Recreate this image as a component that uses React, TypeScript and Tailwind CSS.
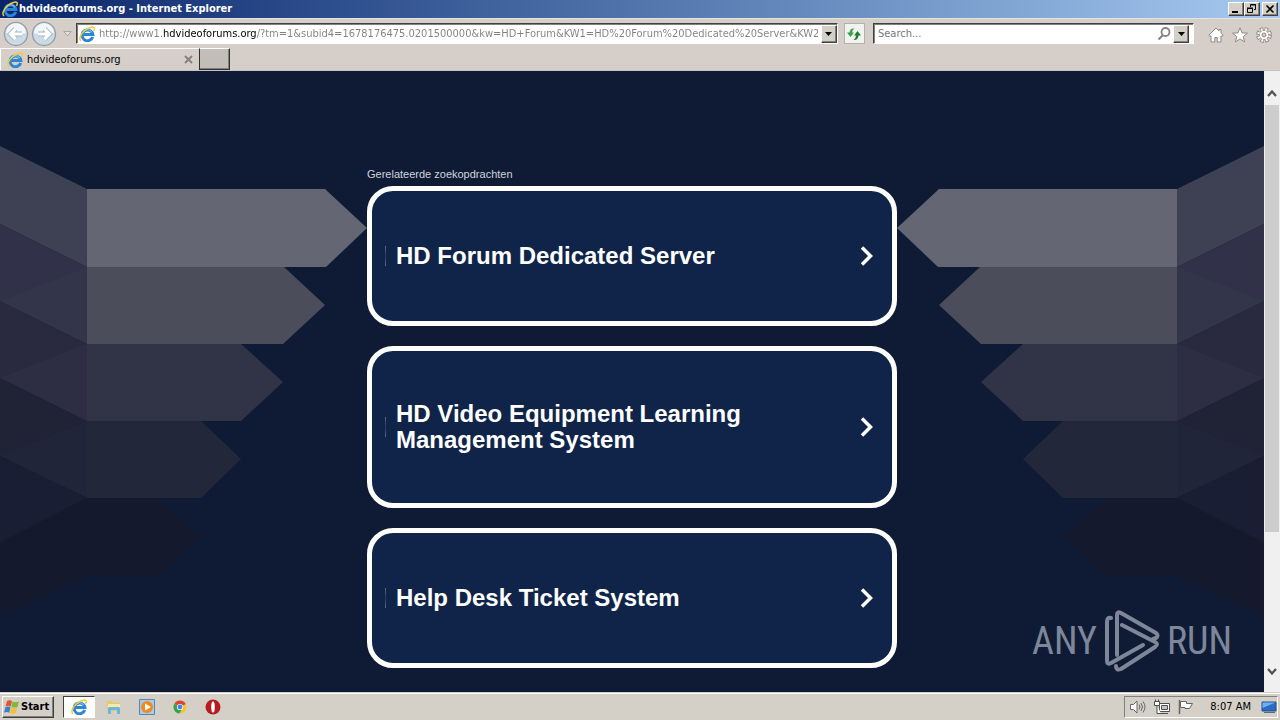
import type { ReactNode } from "react";

const UI = "font-['DejaVu_Sans_Condensed','DejaVu_Sans',sans-serif] text-[11px] leading-[14px]";

const RAISED =
  "border border-t-white border-l-white border-r-[#404040] border-b-[#404040] bg-[#d4d0c8] shadow-[inset_-1px_-1px_0_#808080]";

const ADDRESS =
  "http://www1.hdvideoforums.org/?tm=1&subid4=1678176475.0201500000&kw=HD+Forum&KW1=HD%20Forum%20Dedicated%20Server&KW2=HD";

const searches = [
  "HD Forum Dedicated Server",
  "HD Video Equipment Learning Management System",
  "Help Desk Ticket System",
];

function IeGlyph() {
  return (
    <g fill="none">
      <path d="M13.700 11a5.400 5.400 0 1 1 .2-2.400H4.500" stroke="#2b86d6" strokeWidth="3" />
      <path d="M12.800 6.200A5 5 0 0 0 4 6.500" stroke="#6cc0f2" strokeWidth="1.300" />
      <path
        d="M2.200 14.800C-.4 13.600 1.200 8.600 5.600 4.800 9.400 1.500 14 .2 15 1.700c.5.8.2 2-.5 3.200"
        stroke="#f2cb35"
        strokeWidth="1.500"
      />
    </g>
  );
}

function IeLogo({ className }: { className: string }) {
  return (
    <svg viewBox="0 0 16 16" className={className} aria-hidden="true">
      <IeGlyph />
    </svg>
  );
}

function Caret() {
  return (
    <svg viewBox="0 0 7 4" className="h-1 w-[7px]" aria-hidden="true">
      <path d="M0 0h7L3.500 4z" fill="#000" />
    </svg>
  );
}

function CaptionButton({ label, children }: { label: string; children: ReactNode }) {
  return (
    <button aria-label={label} className={`grid h-[14px] w-4 place-items-center ${RAISED}`}>
      <svg viewBox="0 0 12 10" className="h-[10px] w-3" fill="none" stroke="#000">
        {children}
      </svg>
    </button>
  );
}

function TitleBar() {
  return (
    <header className="flex h-[18px] shrink-0 items-center bg-gradient-to-r from-[#0a246a] to-[#a6caf0] px-[2px]">
      <IeLogo className="h-4 w-4" />
      <h1 className={`${UI} ml-px font-bold text-white`}>hdvideoforums.org - Internet Explorer</h1>
      <div className="ml-auto flex">
        <CaptionButton label="Minimize">
          <path d="M2 8h6" strokeWidth="2" />
        </CaptionButton>
        <CaptionButton label="Restore">
          <path d="M4.500 3V.5h5v5H8M4 1h6M1.500 4.500h5v4h-5zM1 4h6" />
        </CaptionButton>
        <div className="ml-[2px] flex">
          <CaptionButton label="Close">
            <path d="M2.500 1.500l7 7M9.500 1.500l-7 7" strokeWidth="1.600" />
          </CaptionButton>
        </div>
      </div>
    </header>
  );
}

function NavArrows() {
  return (
    <div className="flex shrink-0 items-center">
      {["Back", "Forward"].map((label) => {
        const arrow = label === "Back" ? "M20 13H9M13.500 8l-5 5 5 5" : "M8 13h11M14.500 8l5 5-5 5";
        return (
          <button key={label} aria-label={label} className="h-[26px] w-7">
            <svg viewBox="0 0 28 26" className="h-[26px] w-7" fill="none">
              <circle cx="14" cy="13" r="11.500" fill="#ccdae6" stroke="#929da8" strokeWidth="1.300" />
              <path d="M4 12a10 10 0 0 1 20 0q-10 3-20 0" fill="#f2f6fa" />
              <path d={arrow} stroke="#a3b4c4" strokeWidth="5" />
              <path d={arrow} stroke="#fff" strokeWidth="3.200" />
            </svg>
          </button>
        );
      })}
      <button aria-label="Recent pages" className="grid h-5 w-[18px] place-items-center">
        <svg viewBox="0 0 9 6" className="h-[6px] w-[9px]">
          <path d="M.8.5h7.400L4.500 5z" fill="#e4e0da" stroke="#aaa6a0" />
        </svg>
      </button>
    </div>
  );
}

function Toolbar() {
  return (
    <div className="flex h-[30px] shrink-0 items-center border-t border-[#e8e4dc] bg-[#d6cfc9] pl-[2px]">
      <NavArrows />
      <div className="flex h-[21px] min-w-0 flex-[765] items-center border border-t-[#404040] border-l-[#404040] border-r-white border-b-white bg-white pl-[2px] shadow-[inset_1px_1px_0_#808080]">
        <IeLogo className="h-4 w-4 shrink-0" />
        <input
          aria-label="Address"
          defaultValue={ADDRESS}
          className={`${UI} ml-1 min-w-0 flex-1 bg-[linear-gradient(90deg,#808080_64px,#000_64px,#000_157px,#808080_157px)] bg-clip-text text-transparent outline-none`}
        />
        <button aria-label="Show address list" className={`ml-[3px] grid h-[18px] w-4 shrink-0 place-items-center ${RAISED}`}>
          <Caret />
        </button>
      </div>
      <button aria-label="Refresh" className="mr-2 ml-[6px] grid h-[21px] w-[21px] shrink-0 place-items-center border border-[#b4b0aa] bg-[#f1f3ee]">
        <svg viewBox="0 0 16 16" className="h-4 w-4">
          <path d="M8.500 2.500Q4 2 3.500 6.500H1L4.500 11 8 6.500H6Q6 4 8.500 2.500z" fill="#37a044" />
          <path d="M7.500 14q4.500.5 5-4.500H15L11.500 5 8 9.500h2Q10 12.500 7.500 14z" fill="#1f7f2c" />
        </svg>
      </button>
      <div className="flex h-[21px] min-w-0 flex-[318] items-center border border-t-[#404040] border-l-[#404040] border-r-white border-b-white bg-white pr-1 shadow-[inset_1px_1px_0_#808080]">
        <input
          type="search"
          aria-label="Search"
          placeholder="Search..."
          className={`${UI} ml-1 min-w-0 flex-1 outline-none placeholder:text-[#777777]`}
        />
        <button aria-label="Go" className="grid h-4 w-[18px] place-items-center">
          <svg viewBox="0 0 14 14" className="h-[14px] w-[14px]" fill="none" stroke="#858585">
            <circle cx="8.500" cy="5" r="4" strokeWidth="1.800" />
            <path d="M6 8L1.500 12.500" strokeWidth="2.200" />
          </svg>
        </button>
        <button aria-label="Search options" className={`grid h-[18px] w-4 place-items-center ${RAISED}`}>
          <Caret />
        </button>
      </div>
      <div className="flex shrink-0 items-center gap-2 pt-[2px] pr-2 pl-[14px]">
        <button aria-label="Home">
          <svg viewBox="0 0 16 16" className="h-4 w-4" fill="#fff" stroke="#8e8a85">
            <path d="M8 1L.8 8.300l1.300 1.200.9-.8v6.300h3.800v-4.500h2.400V15H13V8.700l.9.8 1.300-1.200-2.200-2.200V2.500h-2v1.600z" />
          </svg>
        </button>
        <button aria-label="Favorites">
          <svg viewBox="0 0 16 16" className="h-4 w-4" fill="#fff" stroke="#8e8a85">
            <path d="M8 .8l2 5.100 5.400.2-4.200 3.500 1.500 5.400L8 11.900 3.300 15l1.500-5.400L.6 6.100 6 5.900z" />
          </svg>
        </button>
        <button aria-label="Tools">
          <svg viewBox="0 0 16 16" className="h-4 w-4" fill="none">
            <circle cx="8" cy="8" r="6.200" stroke="#8e8a85" strokeWidth="3.400" strokeDasharray="3.400 1.470" />
            <circle cx="8" cy="8" r="4.800" fill="#fff" stroke="#8e8a85" />
            <circle cx="8" cy="8" r="5.700" stroke="#fff" strokeWidth="2.400" strokeDasharray="1.800 2.677" strokeDashoffset="-.6" />
            <circle cx="8" cy="8" r="2" fill="#d6cfc9" stroke="#8e8a85" />
          </svg>
        </button>
      </div>
    </div>
  );
}

function TabStrip() {
  return (
    <div role="tablist" className="flex h-[23px] shrink-0 border-b border-[#c3c4c8] bg-[#d6cfc9]">
      <div className="flex w-[199px] items-center border-t border-l border-white pr-[6px] pl-[6px]">
        <button role="tab" aria-selected="true" className={`${UI} flex flex-1 items-center gap-1 text-left text-black`}>
          <IeLogo className="h-4 w-4" />
          hdvideoforums.org
        </button>
        <button aria-label="Close tab">
          <svg viewBox="0 0 9 9" className="h-[9px] w-[9px]" stroke="#85817c" strokeWidth="2">
            <path d="M1 1l7 7M8 1L1 8" />
          </svg>
        </button>
      </div>
      <button
        aria-label="New tab"
        className="h-[22px] w-[31px] border border-t-white border-r-[#303030] border-b-[#303030] border-l-[#303030] bg-[#c3bdb7] shadow-[inset_-1px_-1px_0_#808080]"
      />
    </div>
  );
}

function ArrowBands() {
  return (
    <g>
      <path d="M0 75l87 43v78L0 153z" fill="#3e4053" />
      <path d="M0 153l87 43v77L0 230z" fill="#31324a" />
      <path d="M0 230l87-34v77z" fill="#33354a" />
      <path d="M0 230l87 43v77L0 307z" fill="#292a3f" />
      <path d="M0 307l87-34v77z" fill="#2d2e43" />
      <path d="M0 307l87 43v77L0 385z" fill="#202236" />
      <path d="M0 385l87-35v77z" fill="#212539" />
      <path d="M0 385l87 42L0 472z" fill="#1a1e34" />
      <path d="M0 472l87-45v78L0 546z" fill="#15192d" />
      <path d="M87 118h238l42 39-41 39H87z" fill="#646673" />
      <path d="M87 196h197l41 38-42 39H87z" fill="#4c4d5b" />
      <path d="M87 273h154l42 38-42 39H87z" fill="#313346" />
      <path d="M87 350h114l40 38-40 39H87z" fill="#22273a" />
      <path d="M87 427h72l41 39-41 39H87z" fill="#15192e" />
    </g>
  );
}

function Backdrop() {
  return (
    <svg
      viewBox="0 0 1264 621"
      preserveAspectRatio="xMidYMin slice"
      className="absolute inset-0 h-full w-full"
      aria-hidden="true"
    >
      <ArrowBands />
      <g transform="matrix(-1 0 0 1 1264 0)">
        <ArrowBands />
      </g>
    </svg>
  );
}

function Watermark() {
  return (
    <div className="absolute right-8 bottom-5 flex items-center gap-[7px] font-['Roboto_Condensed','Liberation_Sans_Narrow','DejaVu_Sans_Condensed',sans-serif] text-[38px] leading-[62px] text-[#7e8799]">
      <span>ANY</span>
      <svg
        viewBox="0 0 56 62"
        className="h-[62px] w-14"
        fill="none"
        stroke="#7e8799"
        strokeWidth="4"
        strokeLinecap="round"
        strokeLinejoin="round"
      >
        <path d="M7 8q-4-1-4 4v39q0 4 4 2l32-18" />
        <path d="M13 45V5q0-4 4-2l35 20q3 3 0 5l-3 1" />
        <path d="M18 15l33 17q4 2 0 5L17 59q-5 2-5-3" />
      </svg>
      <span>RUN</span>
    </div>
  );
}

function Scrollbar() {
  return (
    <div className="flex w-4 shrink-0 flex-col bg-[#f0f0f0]">
      <button aria-label="Scroll up" className="grid h-[34px] place-items-center pt-[10px]">
        <svg viewBox="0 0 10 7" className="h-[7px] w-[10px]" fill="none" stroke="#505050" strokeWidth="2.200">
          <path d="M1 6l4-4.500L9 6" />
        </svg>
      </button>
      <div className="flex-[427] px-px">
        <div className="h-full bg-[#cdcdcd]" />
      </div>
      <div className="flex-[128]" />
      <button aria-label="Scroll down" className="grid h-8 place-items-center pb-[10px]">
        <svg viewBox="0 0 10 7" className="h-[7px] w-[10px]" fill="none" stroke="#505050" strokeWidth="2.200">
          <path d="M1 1l4 4.500L9 1" />
        </svg>
      </button>
    </div>
  );
}

function SearchCard({ title }: { title: string }) {
  return (
    <a
      href="#"
      className="flex min-h-[140px] items-center rounded-[26px] border-[5px] border-white bg-[#10244a] py-[50px] pr-[18px] pl-[13px] text-white"
    >
      <span className="h-5 w-px bg-gradient-to-b from-[#5d6b89] via-[#26385e] to-[#5d6b89]" />
      <span className="ml-[10px] flex-1 pr-16 text-2xl leading-[26px] font-bold">{title}</span>
      <svg viewBox="0 0 14 20" className="h-5 w-[14px]" fill="none" stroke="#fff" strokeWidth="3.500">
        <path d="M2 1.500l8.500 8.500L2 18.500" />
      </svg>
    </a>
  );
}

function PageView() {
  return (
    <main className="flex min-h-0 flex-1">
      <div className="relative min-w-0 flex-1 overflow-hidden bg-[#0f1b35] font-['Liberation_Sans',Arial,sans-serif]">
        <Backdrop />
        <section className="relative mx-auto max-w-[530px] pt-24">
          <h2 className="mb-[5px] text-[11px] leading-[14px] text-[#d0d4dc]">Gerelateerde zoekopdrachten</h2>
          <div className="flex flex-col gap-5">
            {searches.map((title) => (
              <SearchCard key={title} title={title} />
            ))}
          </div>
        </section>
        <Watermark />
      </div>
      <Scrollbar />
    </main>
  );
}

function TaskButton({ label, active = false, children }: { label: string; active?: boolean; children: ReactNode }) {
  return (
    <button
      aria-label={label}
      className={
        active
          ? "mr-[2px] grid h-[22px] w-8 place-items-center border border-t-[#404040] border-l-[#404040] border-r-white border-b-white bg-white"
          : "grid h-[22px] w-[33px] place-items-center"
      }
    >
      <svg viewBox="0 0 16 16" className="h-4 w-4">
        {children}
      </svg>
    </button>
  );
}

function Taskbar() {
  return (
    <footer className="flex h-7 shrink-0 items-center border-t border-[#d4d0c8] bg-[#d4d0c8] shadow-[inset_0_1px_0_#fff]">
      <button className={`${UI} ml-[2px] flex h-[22px] w-[52px] items-center font-bold text-black ${RAISED}`}>
        <svg viewBox="0 0 16 16" className="ml-px h-4 w-4 shrink-0" aria-hidden="true">
          <path d="M3 2q2.500-1.500 5 0L6.800 7.500q-2.300-1.300-5.300 0z" fill="#e2552b" />
          <path d="M8.500 2.500q3 1.300 6.500 0L13.500 8q-2.900 1.200-6 0z" fill="#7fb93c" />
          <path d="M1.400 8.200q2.600-1.300 5.200 0L5.200 13.700q-2.200-1.300-5.200 0z" fill="#3a7fd0" />
          <path d="M7.200 8.700q2.800 1.300 6 0L11.800 14q-2.900 1.400-6 0z" fill="#f5c12e" />
        </svg>
        <span className="ml-px">Start</span>
      </button>
      <nav className="ml-[9px] flex items-center">
        <TaskButton label="Internet Explorer" active>
          <IeGlyph />
        </TaskButton>
        <TaskButton label="Windows Explorer">
          <path d="M1 2h5l1 1.500h7V12H1z" fill="#e9c869" />
          <path d="M2 5h12v4H2z" fill="#f8e9a8" />
          <path d="M2 15V9.500Q2 8 3.500 8h9Q14 8 14 9.500V15h-3v-4H5v4z" fill="#69b7dd" />
        </TaskButton>
        <TaskButton label="Windows Media Player">
          <path d="M.5.5h15v15H.5z" fill="#a9cbea" stroke="#5486b8" />
          <circle cx="8" cy="8" r="6" fill="#f08a1d" />
          <path d="M6 4.500l6 3.500-6 3.500z" fill="#fff" />
        </TaskButton>
        <TaskButton label="Google Chrome">
          <circle cx="8" cy="8" r="6.500" fill="#f4c52d" />
          <path d="M8 8L2.400 4.700A6.500 6.500 0 0 1 13.700 5z" fill="#db4437" />
          <path d="M8 8L2.400 4.700A6.500 6.500 0 0 0 7.300 14.500L10 10z" fill="#34a253" />
          <circle cx="8" cy="8" r="3.100" fill="#fff" />
          <circle cx="8" cy="8" r="2.400" fill="#4285e8" />
        </TaskButton>
        <TaskButton label="Opera">
          <circle cx="8" cy="8" r="7.500" fill="#b91c1f" />
          <ellipse cx="8" cy="8" rx="1.800" ry="5.500" fill="#fff" />
        </TaskButton>
      </nav>
      <div className="mr-[2px] ml-auto flex h-[22px] items-center border border-t-[#808080] border-l-[#808080] border-r-white border-b-white pl-[5px]">
        <div className="flex gap-2">
          <button aria-label="Volume">
            <svg viewBox="0 0 16 16" className="h-4 w-4" fill="none" stroke="#666">
              <path d="M.5 5.500h3L7 2v12L3.500 10.500h-3z" fill="#fff" />
              <path d="M9 5.500q2 2.500 0 5M11 4q3 4 0 8M13 2.500q4 5.500 0 11" />
            </svg>
          </button>
          <button aria-label="Network">
            <svg viewBox="0 0 16 16" className="h-4 w-4" fill="#fff" stroke="#4f4f4f">
              <path d="M5.500 4.500h10v8h-10z" />
              <path d="M7.500 6.500h6v4h-6z" fill="#c5c5c5" />
              <path d="M7 14.500h7M.5 2.500h5v4h-5zM1.500.5v2M4.500.5v2M3 6.500v8h4" />
            </svg>
          </button>
          <button aria-label="Action Center">
            <svg viewBox="0 0 16 16" className="h-4 w-4" fill="#fff" stroke="#666">
              <path d="M1.500 1v14" strokeWidth="1.500" />
              <path d="M2.500 2.500h6v2h6l-3 5H7v-1H2.500z" />
            </svg>
          </button>
        </div>
        <time className={`${UI} ml-4 text-black`}>8:07 AM</time>
        <button aria-label="Show desktop" className="ml-[10px]">
          <svg viewBox="0 0 16 16" className="h-4 w-4">
            <path d="M1 3h14v9H1z" fill="#2a6cc4" stroke="#234f8d" />
            <path d="M1.500 3.500h13L1.500 9z" fill="#6fb0ee" />
            <path d="M3 13.500h11" stroke="#5d6a7c" />
          </svg>
        </button>
      </div>
    </footer>
  );
}

export default function App() {
  return (
    <div className="flex h-screen flex-col overflow-hidden">
      <TitleBar />
      <Toolbar />
      <TabStrip />
      <PageView />
      <Taskbar />
    </div>
  );
}
